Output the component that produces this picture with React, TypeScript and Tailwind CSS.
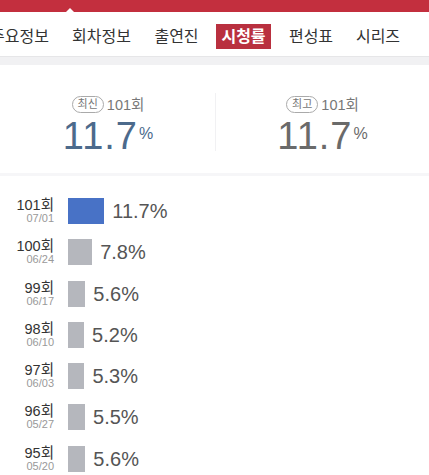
const tabs = [
  { label: '주요정보' },
  { label: '회차정보' },
  { label: '출연진' },
  { label: '시청률', active: true },
  { label: '편성표' },
  { label: '시리즈' },
];

const episodes = [
  { ep: '101회', date: '07/01', rating: 11.7, latest: true },
  { ep: '100회', date: '06/24', rating: 7.8 },
  { ep: '99회', date: '06/17', rating: 5.6 },
  { ep: '98회', date: '06/10', rating: 5.2 },
  { ep: '97회', date: '06/03', rating: 5.3 },
  { ep: '96회', date: '05/27', rating: 5.5 },
  { ep: '95회', date: '05/20', rating: 5.6 },
];

function Stat({ badge, color }: { badge: string; color: string }) {
  return (
    <div className="flex flex-col items-center pt-[31px]">
      <div className="flex items-center gap-[3px] text-[#777]">
        <span className="h-[17px] px-[5px] rounded-full border border-[#aaa] text-[11px] leading-[15px]">{badge}</span>
        <span className="text-[14.5px] leading-[16px]">101회</span>
      </div>
      <div className={`flex items-start mt-[7px] ${color}`}>
        <span className="text-[38px] leading-[32px] tracking-[1px]">11.7</span>
        <span className="text-[16px] leading-[20px] ml-[1px] mt-[4px]">%</span>
      </div>
    </div>
  );
}

export default function App() {
  return (
    <div className="w-[429px] h-[475px] overflow-hidden bg-white" style={{ fontFamily: '"Liberation Sans", "Noto Sans CJK KR", sans-serif' }}>
      <div className="relative h-[12px] bg-[#c32f3e]">
        <div className="absolute left-[66px] bottom-0 w-0 h-0 border-l-[4px] border-r-[4px] border-b-[4px] border-l-transparent border-r-transparent border-b-white" />
      </div>

      <nav className="h-[45px] grid grid-cols-[81px_83px_67px_67px_68px_66px] items-center justify-items-center pt-[4px] ml-[-21px] w-[450px] border-b border-[#e6e6e8]">
        {tabs.map((t) => (
          <span
            key={t.label}
            className={
              t.active
                ? 'w-[55px] text-center h-[25px] leading-[25px] text-[16px] font-bold text-white bg-[#b9303f]'
                : 'whitespace-nowrap h-[25px] leading-[25px] text-[16px] text-[#333]'
            }
          >
            {t.label}
          </span>
        ))}
      </nav>
      <div className="h-[8px] bg-[#f1f1f3]" />

      <div className="h-[108px] grid grid-cols-[216px_1fr]">
        <div className="relative">
          <Stat badge="최신" color="text-[#4c6a8c]" />
          <div className="absolute right-0 top-[28px] h-[58px] w-px bg-[#f1f1f3]" />
        </div>
        <Stat badge="최고" color="text-[#6a6a6a]" />
      </div>
      <div className="h-[3px] bg-[#f6f6f8]" />

      <div className="flex flex-col gap-[15.3px] pt-[22px]">
        {episodes.map((e) => (
          <div key={e.ep} className="flex items-center h-[26px]">
            <div className="w-[54px] flex flex-col items-end">
              <span className="text-[14.5px] leading-[15px] text-[#333]">{e.ep}</span>
              <span className="text-[11px] leading-[11px] text-[#999]">{e.date}</span>
            </div>
            <div
              className={e.latest ? 'ml-[14px] h-[26px] bg-[#4872c6]' : 'ml-[14px] h-[26px] bg-[#b5b7bd]'}
              style={{ width: `${e.rating * 3.1}px` }}
            />
            <span className="ml-[8px] text-[20px] text-[#555]">{e.rating}%</span>
          </div>
        ))}
      </div>
    </div>
  );
}
